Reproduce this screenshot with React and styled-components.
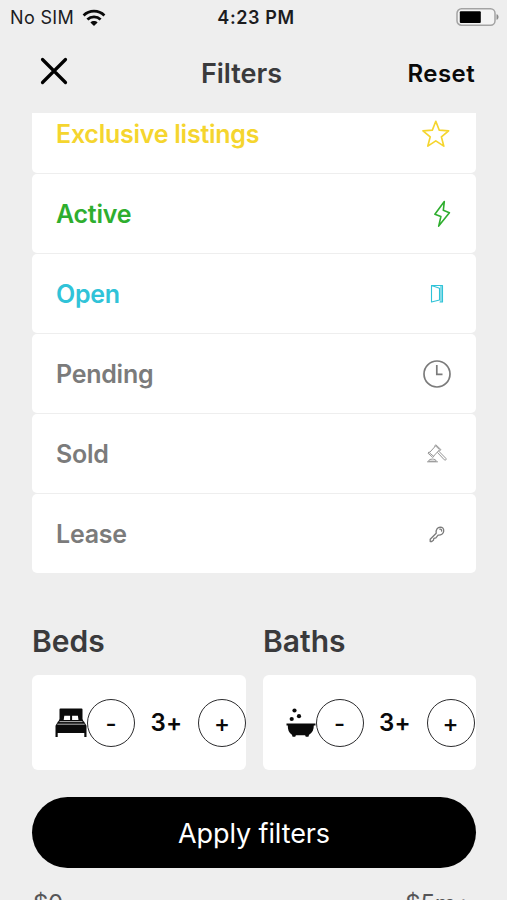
import React, { Component } from 'react'
import styled, { createGlobalStyle } from 'styled-components'

const GlobalStyle = createGlobalStyle`
    * {
        box-sizing:border-box;
    }
    body {
        margin:0;
        background:#eeeeee;
    }
`

const Screen = styled.div`
    height:900px;
    width:507px;
    overflow:hidden;
    display:flex;
    flex-direction:column;
    background:#eeeeee;
    color:#3a3a3c;
    font-family:Inter, "Liberation Sans", sans-serif;
    line-height:1;
    white-space:nowrap;
`

const StatusBar = styled.div`
    display:grid;
    grid-template-columns:1fr auto 1fr;
    align-items:center;
    height:34px;
    padding:0 8px 0 10px;
    flex:none;
    color:#1c1c1e;
`

const Carrier = styled.div`
    display:flex;
    align-items:center;
    gap:8px;
    padding-top:1px;
    font-size:18px;
    letter-spacing:0.35px;
`

const Clock = styled.div`
    padding:1px 0 0 3px;
    font-size:18px;
    font-weight:600;
    letter-spacing:0.6px;
`

const Battery = styled.svg`
    justify-self:end;
`

const Header = styled.header`
    display:grid;
    grid-template-columns:1fr auto 1fr;
    align-items:center;
    height:79px;
    padding:0 32px 0 40px;
    flex:none;
`

const IconButton = styled.button`
    display:flex;
    padding:0;
    margin-bottom:5px;
    border:0;
    background:none;
`

const Title = styled.h1`
    margin:0 32px 0 0;
    font-size:27px;
    font-weight:600;
`

const ResetButton = styled.button`
    justify-self:end;
    padding:0;
    border:0;
    background:none;
    color:#0a0a0a;
    font:600 24px Inter, "Liberation Sans", sans-serif;
    letter-spacing:0.4px;
`

const ScrollArea = styled.main`
    flex:none;
    height:683.5px;
    padding:0 31px 0 32px;
    overflow:hidden;
`

const StatusList = styled.div`
    display:flex;
    flex-direction:column;
    gap:1.5px;
    margin-top:-19px;
`

const StatusRow = styled.div`
    display:flex;
    align-items:center;
    justify-content:space-between;
    height:78.5px;
    padding:1.5px 24px 0;
    border-radius:5px;
    background:#ffffff;
    color:${props => props.$color};
    font-size:25px;
    font-weight:600;
    letter-spacing:-0.25px;
    svg {
        flex:none;
    }
`

const Counters = styled.div`
    display:grid;
    grid-template-columns:213.5px 213px;
    justify-content:space-between;
    margin-top:52px;
`

const CounterTitle = styled.h2`
    margin:0 0 17px;
    font-size:30px;
    line-height:33px;
    font-weight:600;
`

const CounterCard = styled.div`
    display:flex;
    align-items:center;
    height:95px;
    padding:1.5px 0 0 23px;
    border-radius:6px;
    background:#ffffff;
    color:#0a0a0a;
    svg {
        flex:none;
    }
`

const RoundButton = styled.button`
    display:flex;
    align-items:center;
    justify-content:center;
    flex:none;
    width:48px;
    height:48px;
    padding:2px 0 0;
    border:1.5px solid #2c2c2e;
    border-radius:50%;
    background:none;
    color:#0a0a0a;
    font:500 24px Inter, "Liberation Sans", sans-serif;
`

const Count = styled.div`
    flex:none;
    width:63px;
    text-align:center;
    font-size:24px;
    font-weight:600;
    letter-spacing:0.3px;
`

const Footer = styled.footer`
    flex:none;
    padding:0 31px 0 32px;
`

const ApplyButton = styled.button`
    display:block;
    width:100%;
    height:71.5px;
    padding:2px 0 0;
    border:0;
    border-radius:36px;
    background:#000000;
    color:#ffffff;
    font:400 27px Inter, "Liberation Sans", sans-serif;
    letter-spacing:-0.1px;
`

const PriceRange = styled.div`
    display:flex;
    justify-content:space-between;
    padding:23.5px 5px 0 1px;
    color:#555557;
    font-size:24px;
    letter-spacing:-0.3px;
`

const Line = ({ size = 30, sw = 1.4, children }) => (
    <svg width={size} height={size} viewBox="0 0 30 30" fill="none" stroke="currentColor" strokeWidth={sw} strokeLinejoin="round" strokeLinecap="round">
        {children}
    </svg>
)

const Star = () => (
    <Line sw={1.7}>
        <path d="M13.8 2.3l3.5 8.9 9.3.6-7.2 6.1 2.4 9.2-8-5.2-8 5.2 2.4-9.2L1 11.8l9.300-.6z" />
    </Line>
)

const Bolt = () => (
    <Line sw={1.6}>
        <path d="M22.3 2.6l-9.400 12.700 6 2.300-2.200 9.500 10.700-13.400-6.100-2.400z" />
    </Line>
)

const Door = () => (
    <Line sw={1.1}>
        <path d="M9.500 6.500h11v16.500h-2.500M9.500 6.500v16.500l8-2V9.300l-8-2.800M19 6.500v16.500" />
    </Line>
)

const ClockIcon = () => (
    <Line sw={1.7}>
        <circle cx="15" cy="15" r="13" />
        <path d="M14.800 6v9.300h5.700" strokeLinecap="butt" strokeLinejoin="miter" />
    </Line>
)

const Gavel = () => (
    <Line sw={1}>
        <g opacity=".8">
            <path d="M7.600 13.500l6-6.600 4 3.800-5.800 6.200zM12.400 7.200l1.500-1.400 5 4.800-1.400 1.500M7 12.900l-1 1.300 4.700 4.200 1.300-1.200M15.600 13.600l6.700 7.200c1 1 2.500-.3 1.600-1.400l-6.900-7" />
            <path d="M6.600 21.800c0-2.400 7.600-2.400 7.600 0zM5.500 22.800h10" />
        </g>
    </Line>
)

const Key = () => (
    <Line sw={1.3}>
        <path d="M14.200 14.200c-.6-3.300 1.400-6 4-6.100 2.400 0 3.700 1.600 3.500 4-.2 2.700-2.700 4.300-5.600 4l-2.200 2.700-2 .5-.5 2-1.600 1.200H8.200v-2.300z" />
        <path d="M17.800 10.200c1.200-.3 2 .6 1.800 1.800" />
    </Line>
)

const Bed = () => (
    <svg width="32" height="30" viewBox="0 0 32 30" fill="currentColor">
        <path d="M4.500 1.500q0-1 1-1h21q1 0 1 1V11l1.300 3H3.200l1.300-3z" />
        <path d="M3 13.500h26l2.500 4.300V29h-2.200v-4H2.700v4H.5V17.800z" />
        <path d="M9.300 7.800h5.800v4.300H8.700zM17.100 7.800h5.800l.6 4.300h-6.400z" fill="#ffffff" />
        <path d="M4.500 13.600h23M2.300 16.200h27.400" stroke="#ffffff" strokeWidth=".7" />
    </svg>
)

const Bath = () => (
    <svg width="29.500" height="30" viewBox="-.5 0 29.500 30" fill="currentColor">
        <circle cx="8" cy="2.500" r="2.100" />
        <circle cx="12.500" cy="8.200" r="2.100" />
        <circle cx="5.200" cy="11" r="2.100" />
        <path d="M0 15.500h29v2h-1.700c.1 4-1.400 7.300-4.700 9.300l-.7 2h-2.600l-.7-1.500h-9.200l-.7 1.500H6.100l-.7-2C2.300 24.800 1.200 21.500 1.300 17.500H0z" />
    </svg>
)

const STATUSES = [
    { label: 'Exclusive listings', color: '#f5d52e', icon: <Star /> },
    { label: 'Active', color: '#2eae2e', icon: <Bolt /> },
    { label: 'Open', color: '#30c3d8', icon: <Door /> },
    { label: 'Pending', color: '#7b7b7b', icon: <ClockIcon /> },
    { label: 'Sold', color: '#7b7b7b', icon: <Gavel /> },
    { label: 'Lease', color: '#7b7b7b', icon: <Key /> }
]

class Counter extends Component {
    render() {
        const { title, icon, value, onChange } = this.props
        return (
            <div>
                <CounterTitle>{title}</CounterTitle>
                <CounterCard>
                    {icon}
                    <RoundButton onClick={() => onChange(Math.max(0, value - 1))}>-</RoundButton>
                    <Count>{value}+</Count>
                    <RoundButton onClick={() => onChange(value + 1)}>+</RoundButton>
                </CounterCard>
            </div>
        )
    }
}

export class Filters extends Component {
    constructor(props) {
        super(props)
        this.state = { beds: 3, baths: 3 }
    }

    reset = () => {
        this.setState({ beds: 3, baths: 3 })
    }

    render() {
        return (
            <Screen>
                <GlobalStyle />
                <StatusBar>
                    <Carrier>
                        No SIM
                        <svg width="24" height="18" viewBox="0 0 24 18" fill="none" stroke="#0a0a0a" strokeWidth="2.8">
                            <path d="M1.600 6.400c5.800-5.600 15-5.600 20.800 0M5.400 10.400c3.700-3.500 9.500-3.500 13.200 0" />
                            <path d="M12 17l-3.600-3.600c2-1.900 5.200-1.900 7.200 0z" fill="#0a0a0a" stroke="none" />
                        </svg>
                    </Carrier>
                    <Clock>4:23 PM</Clock>
                    <Battery width="43" height="18" viewBox="0 0 43 18">
                        <rect x="1" y=".8" width="38" height="16.400" rx="4.500" fill="#f4f4f4" stroke="#a3a3a3" strokeWidth="1.500" />
                        <rect x="3.800" y="3.200" width="21" height="11.800" rx="1" fill="#000000" />
                        <path d="M40.500 6.200c2.700.5 2.700 5.100 0 5.600z" fill="#8a8a8a" />
                    </Battery>
                </StatusBar>
                <Header>
                    <IconButton aria-label="Close">
                        <svg width="28" height="28" viewBox="0 0 28 28" stroke="#000000" strokeWidth="3.200" strokeLinecap="round">
                            <path d="M2.500 2.500l23 23M25.500 2.500l-23 23" />
                        </svg>
                    </IconButton>
                    <Title>Filters</Title>
                    <ResetButton onClick={this.reset}>Reset</ResetButton>
                </Header>
                <ScrollArea>
                    <StatusList>
                        {STATUSES.map(item => (
                            <StatusRow key={item.label} $color={item.color}>
                                {item.label}
                                {item.icon}
                            </StatusRow>
                        ))}
                    </StatusList>
                    <Counters>
                        <Counter title="Beds" icon={<Bed />} value={this.state.beds} onChange={beds => this.setState({ beds })} />
                        <Counter title="Baths" icon={<Bath />} value={this.state.baths} onChange={baths => this.setState({ baths })} />
                    </Counters>
                </ScrollArea>
                <Footer>
                    <ApplyButton>Apply filters</ApplyButton>
                    <PriceRange>
                        <span>$0</span>
                        <span>$5m+</span>
                    </PriceRange>
                </Footer>
            </Screen>
        )
    }
}

export default Filters
